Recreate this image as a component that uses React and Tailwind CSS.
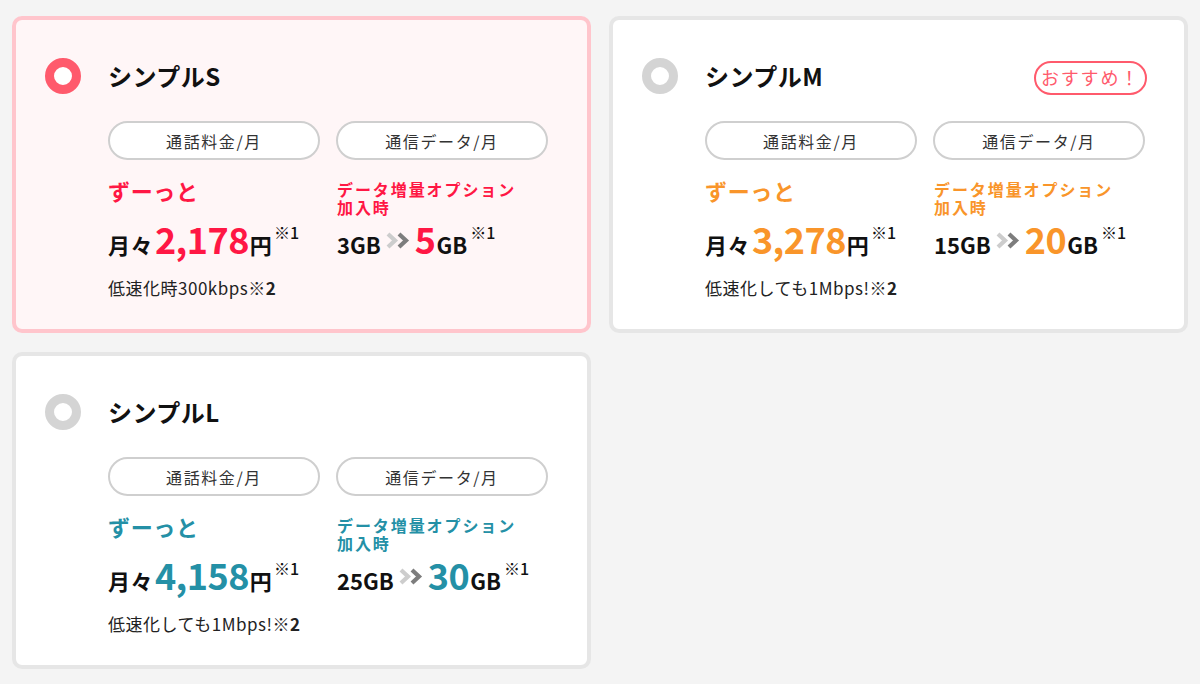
import React from 'react';

const plans = [
  {
    name: 'シンプルS',
    selected: true,
    accent: 'text-[#ff1744]',
    price: '2,178',
    from: '3GB',
    to: '5',
    note: '低速化時300kbps',
  },
  {
    name: 'シンプルM',
    selected: false,
    badge: true,
    accent: 'text-[#f9952a]',
    price: '3,278',
    from: '15GB',
    to: '20',
    note: '低速化しても1Mbps!',
  },
  {
    name: 'シンプルL',
    selected: false,
    accent: 'text-[#2490a6]',
    price: '4,158',
    from: '25GB',
    to: '30',
    note: '低速化しても1Mbps!',
  },
];

function Chevrons() {
  return (
    <svg width="24" height="17" viewBox="0 0 24 17" className="self-center mt-[4px] mx-[5px] shrink-0">
      <path d="M2 2 L9 8.5 L2 15" fill="none" stroke="#cdcdcd" strokeWidth="4.2" />
      <path d="M13 2 L20 8.5 L13 15" fill="none" stroke="#7d7d7d" strokeWidth="4.2" />
    </svg>
  );
}

function PlanCard({ plan }) {
  const { selected, accent } = plan;
  return (
    <div
      className={
        selected
          ? 'w-[579px] rounded-[10px] border-4 border-[#ffc5cc] bg-[#fff6f7] pl-[29px] pr-[35px] pt-[38px] pb-[29px]'
          : 'w-[579px] rounded-[10px] border-4 border-[#e6e6e6] bg-white pl-[29px] pr-[35px] pt-[38px] pb-[29px]'
      }
    >
      <div className="flex items-center h-9">
        <div
          className={
            selected
              ? 'w-9 h-9 rounded-full border-[9px] border-[#ff5a6c] bg-white'
              : 'w-9 h-9 rounded-full border-[9px] border-[#d4d4d4] bg-white'
          }
        />
        <div className="ml-[27px] text-[24px] font-bold leading-none tracking-[0.02em] text-[#111]">{plan.name}</div>
        {plan.badge && (
          <div className="ml-auto mr-[2px] h-[34px] w-[113px] rounded-full border-2 border-[#ff5a6c] flex items-center justify-center text-[18px] tracking-[0.1em] text-[#ff5a6c] mt-[3px]">
            おすすめ！
          </div>
        )}
      </div>

      <div className="ml-[63px] mt-[27px] grid grid-cols-[212px_212px] gap-x-4">
        <div className="h-[39px] rounded-full border-2 border-[#cfcfcf] bg-white flex items-center justify-center text-[16px] tracking-[0.1em] text-[#333]">
          通話料金/月
        </div>
        <div className="h-[39px] rounded-full border-2 border-[#cfcfcf] bg-white flex items-center justify-center text-[16px] tracking-[0.1em] text-[#333]">
          通信データ/月
        </div>

        <div className={`mt-[16px] h-[40px] text-[22px] font-bold leading-[28px] tracking-[0.03em] ${accent}`}>ずーっと</div>
        <div className={`mt-[16px] h-[40px] pt-[4px] pl-px text-[16px] font-bold leading-[18px] tracking-[0.12em] ${accent}`}>
          データ増量オプション
          <br />
          加入時
        </div>

        <div className="mt-[4px] flex items-baseline leading-none text-[#111] font-bold">
          <span className="text-[22px] tracking-[0.02em]">月々</span>
          <span className={`text-[36px] ml-[2px] tracking-[-0.015em] ${accent}`}>{plan.price}</span>
          <span className="text-[22px] ml-px">円</span>
          <span className="text-[16px] font-medium ml-[2px] relative -top-[15px]">※1</span>
        </div>
        <div className="mt-[4px] flex items-baseline leading-none text-[#111] font-bold pl-px">
          <span className="text-[22px]">{plan.from}</span>
          <Chevrons />
          <span className={`text-[36px] tracking-[-0.015em] ${accent}`}>{plan.to}</span>
          <span className="text-[22px] ml-px">GB</span>
          <span className="text-[16px] font-medium ml-[3px] relative -top-[15px]">※1</span>
        </div>

        <div className="col-span-2 mt-[20px] text-[17px] leading-[24px] tracking-[0.03em] text-[#222]">
          {plan.note}
          <span className="font-bold">※2</span>
        </div>
      </div>
    </div>
  );
}

export default function App() {
  return (
    <div
      className="w-[1200px] h-[684px] bg-[#f4f4f4] pl-[12px] pt-[16px]"
      style={{ fontFamily: '"Noto Sans CJK JP", "Noto Sans", sans-serif' }}
    >
      <div className="grid grid-cols-[579px_579px] gap-x-[18px] gap-y-[19px] items-start">
        {plans.map((p) => (
          <PlanCard key={p.name} plan={p} />
        ))}
      </div>
    </div>
  );
}
